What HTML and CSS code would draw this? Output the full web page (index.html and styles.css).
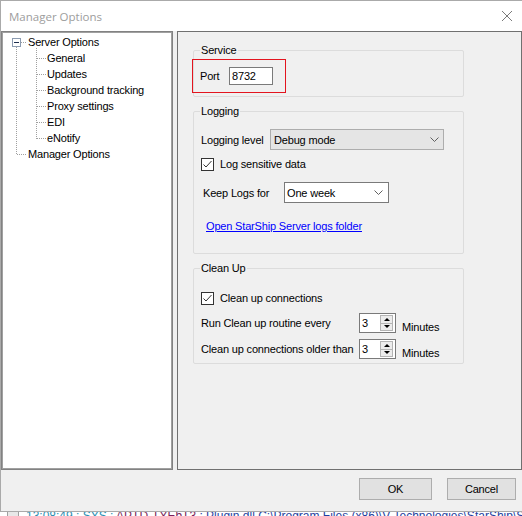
FILE: index.html
```html
<!DOCTYPE html>
<html>
<head>
<meta charset="utf-8">
<link rel="stylesheet" href="styles.css">
</head>
<body>
<div class="window">
  <div class="titlebar">
    <span class="title">Manager Options</span>
    <svg class="close" width="10" height="10" viewBox="0 0 10 10"><path d="M0 0 L10 10 M10 0 L0 10" stroke="#7a7a7a" stroke-width="1" fill="none"/></svg>
  </div>
  <div class="client">
    <div class="main">
      <div class="tree">
        <svg class="treelines" width="60" height="130" viewBox="0 0 60 130">
          <g stroke="#a0a0a0" stroke-width="1" stroke-dasharray="1 1" fill="none">
            <line x1="18" y1="9.5" x2="24" y2="9.5"/>
            <line x1="13.5" y1="14" x2="13.5" y2="122"/>
            <line x1="14" y1="121.5" x2="24" y2="121.5"/>
            <line x1="33.5" y1="15" x2="33.5" y2="106"/>
            <line x1="34" y1="25.5" x2="43" y2="25.5"/>
            <line x1="34" y1="41.5" x2="43" y2="41.5"/>
            <line x1="34" y1="57.5" x2="43" y2="57.5"/>
            <line x1="34" y1="73.5" x2="43" y2="73.5"/>
            <line x1="34" y1="89.5" x2="43" y2="89.5"/>
            <line x1="34" y1="105.5" x2="43" y2="105.5"/>
          </g>
          <rect x="9.5" y="5.5" width="8" height="8" fill="#fff" stroke="#8c9bb0"/>
          <line x1="11" y1="9.5" x2="16" y2="9.5" stroke="#1f2f4f"/>
        </svg>
        <ul class="nodes">
          <li class="node l0">Server Options</li>
          <li class="node l1">General</li>
          <li class="node l1">Updates</li>
          <li class="node l1">Background tracking</li>
          <li class="node l1">Proxy settings</li>
          <li class="node l1">EDI</li>
          <li class="node l1">eNotify</li>
          <li class="node l0">Manager Options</li>
        </ul>
      </div>
      <div class="panel">
        <fieldset class="group service">
          <legend>Service</legend>
          <div class="row port-row">
            <span class="lbl-port">Port</span>
            <span class="textbox port">8732</span>
          </div>
        </fieldset>

        <fieldset class="group logging">
          <legend>Logging</legend>
          <div class="row level-row">
            <span class="lbl-level">Logging level</span>
            <span class="combo gray">
              <span class="combo-text">Debug mode</span>
              <svg class="chev" width="9" height="5" viewBox="0 0 9 5"><path d="M0.5 0.5 L4.5 4.5 L8.5 0.5" stroke="#606060" fill="none"/></svg>
            </span>
          </div>
          <div class="row check-row">
            <span class="checkbox"><svg width="11" height="11" viewBox="0 0 11 11"><path d="M1.5 5.5 L4 8 L9.5 2" stroke="#333" stroke-width="1" fill="none"/></svg></span>
            <span class="check-label">Log sensitive data</span>
          </div>
          <div class="row keep-row">
            <span class="lbl-keep">Keep Logs for</span>
            <span class="combo white">
              <span class="combo-text">One week</span>
              <svg class="chev" width="9" height="5" viewBox="0 0 9 5"><path d="M0.5 0.5 L4.5 4.5 L8.5 0.5" stroke="#606060" fill="none"/></svg>
            </span>
          </div>
          <div class="row link-row"><a class="link">Open StarShip Server logs folder</a></div>
        </fieldset>

        <fieldset class="group cleanup">
          <legend>Clean Up</legend>
          <div class="row check-row clean-check">
            <span class="checkbox"><svg width="11" height="11" viewBox="0 0 11 11"><path d="M1.5 5.5 L4 8 L9.5 2" stroke="#333" stroke-width="1" fill="none"/></svg></span>
            <span class="check-label">Clean up connections</span>
          </div>
          <div class="row spin-row first">
            <span class="lbl-spin">Run Clean up routine every</span>
            <span class="spin"><span class="spin-val">3</span><span class="spin-btns"><span class="sb up"></span><span class="sb down"></span></span></span>
            <span class="unit">Minutes</span>
          </div>
          <div class="row spin-row second">
            <span class="lbl-spin">Clean up connections older than</span>
            <span class="spin"><span class="spin-val">3</span><span class="spin-btns"><span class="sb up"></span><span class="sb down"></span></span></span>
            <span class="unit">Minutes</span>
          </div>
        </fieldset>
        <div class="highlight"></div>
      </div>
    </div>
    <div class="footer">
      <button class="btn ok">OK</button>
      <button class="btn cancel">Cancel</button>
    </div>
  </div>
</div>
<div class="behind">
  <span class="bh-edge"></span>
  <span class="bh-text"><span class="t1">13:08:49 : SYS : </span><span class="t2">APTD-TYEbT3</span><span class="t3"> : Plugin dll C:\Program Files (x86)\V-Technologies\StarShip\Server\Core</span></span>
</div>
</body>
</html>
```
FILE: styles.css
```css
html, body {
  margin: 0;
  padding: 0;
}
body {
  width: 522px;
  height: 516px;
  overflow: hidden;
  background: #ffffff;
  font-family: "Liberation Sans", Arial, sans-serif;
  font-size: 11px;
  letter-spacing: -0.17px;
  color: #000;
}
.window {
  width: 521px;
  height: 510px;
  border: 1px solid #aaaaaa;
  border-right: none;
  background: #f0f0f0;
}
.titlebar {
  height: 30px;
  background: #ffffff;
  display: flex;
  align-items: center;
  justify-content: space-between;
  padding: 0 10px 0 8px;
  box-sizing: border-box;
}
.title {
  font-family: "Open Sans", "Noto Sans", sans-serif;
  font-size: 11.5px;
  letter-spacing: 0;
  color: #9d9d9d;
}
.close {
  display: block;
}
.client {
  height: 480px;
  display: flex;
  flex-direction: column;
  background: #f0f0f0;
}
.main {
  display: flex;
  gap: 4px;
  height: 439px;
}
.tree {
  width: 172px;
  box-sizing: border-box;
  border: 1px solid #828282;
  box-shadow: inset 0 0 0 1px #a0a0a0;
  padding: 1px;
  background: #fff;
  position: relative;
}
.treelines {
  position: absolute;
  left: 1px;
  top: 1px;
}
.nodes {
  list-style: none;
  margin: 0;
  padding: 1px 0 0 0;
  position: relative;
}
.node {
  height: 16px;
  line-height: 16px;
  white-space: nowrap;
}
.node.l0 { padding-left: 25px; }
.node.l1 { padding-left: 44px; }

.panel {
  width: 345px;
  box-sizing: border-box;
  border: 1px solid #707070;
  padding: 12px 0 0 15px;
  position: relative;
}
.group {
  margin: 0;
  width: 271px;
  box-sizing: border-box;
  border: 1px solid #dcdcdc;
  border-radius: 2px;
  padding: 0 0 0 6px;
  min-width: 0;
}
.group legend {
  padding: 0 1px;
  margin: 0;
  line-height: 13px;
}
.row {
  display: flex;
  align-items: center;
}
.service { padding-bottom: 11px; }
.port-row { margin-top: 10px; height: 18px; }
.lbl-port { width: 29px; }
.textbox {
  box-sizing: border-box;
  background: #fff;
  border: 1px solid #7a7a7a;
  height: 18px;
  line-height: 16px;
  padding-left: 2px;
}
.port { width: 44px; }

.logging { margin-top: 8px; padding-bottom: 20px; }
.level-row { margin-top: 11px; height: 21px; padding-left: 1px; }
.lbl-level { width: 69px; }
.combo {
  box-sizing: border-box;
  height: 21px;
  display: flex;
  align-items: center;
  justify-content: space-between;
  border: 1px solid #adadad;
}
.combo.gray {
  width: 174px;
  background: #e5e5e5;
  padding: 0 4px 0 3px;
}
.combo.white {
  width: 105px;
  background: #fff;
  border-color: #7a7a7a;
  padding: 0 5px 0 2px;
}
.chev { display: block; }
.check-row { margin-top: 8px; height: 13px; padding-left: 1px; }
.checkbox {
  box-sizing: border-box;
  width: 13px;
  height: 13px;
  border: 1px solid #333;
  background: #fff;
  display: block;
}
.checkbox svg { display: block; }
.check-label { margin-left: 6px; margin-top: -1px; }
.keep-row { margin-top: 11px; height: 21px; padding-left: 3px; }
.lbl-keep { width: 81px; }
.link-row { margin-top: 17px; height: 13px; padding-left: 6px; }
.link {
  color: #0000ff;
  text-decoration: underline;
  line-height: 13px;
}

.cleanup { margin-top: 8px; padding-bottom: 4px; }
.clean-check { margin-top: 17px; }
.spin-row { height: 20px; padding-left: 1px; }
.spin-row.first { margin-top: 8px; }
.spin-row.second { margin-top: 6px; }
.lbl-spin { width: 158px; white-space: nowrap; }
.spin {
  box-sizing: border-box;
  width: 37px;
  height: 20px;
  border: 1px solid #7a7a7a;
  background: #fff;
  display: flex;
  padding: 1px 2px 1px 0;
}
.spin-val {
  flex: 1;
  padding-left: 2px;
  line-height: 16px;
}
.spin-btns {
  width: 13px;
  display: flex;
  flex-direction: column;
}
.sb {
  flex: 1;
  box-sizing: border-box;
  border: 1px solid #b4b4b4;
  background: #ececec;
  display: flex;
  align-items: center;
  justify-content: center;
}
.sb + .sb { border-top: none; }
.sb.up::after {
  content: "";
  border-left: 3px solid transparent;
  border-right: 3px solid transparent;
  border-bottom: 3px solid #000;
}
.sb.down::after {
  content: "";
  border-left: 3px solid transparent;
  border-right: 3px solid transparent;
  border-top: 3px solid #000;
}
.unit {
  margin-left: 6px;
  margin-top: 7px;
}

.highlight {
  position: absolute;
  left: 14px;
  top: 27px;
  width: 94px;
  height: 34px;
  box-sizing: border-box;
  border: 1px solid #e3141e;
}

.footer {
  flex: 1;
  display: flex;
  justify-content: flex-end;
  align-items: flex-start;
  gap: 15px;
  padding: 8px 6px 0 0;
}
.btn {
  box-sizing: border-box;
  height: 22px;
  background: #e1e1e1;
  border: 1px solid #adadad;
  font-family: "Liberation Sans", Arial, sans-serif;
  font-size: 11px;
  letter-spacing: -0.17px;
  color: #000;
  padding: 0;
  margin: 0;
}
.btn.ok { width: 73px; }
.btn.cancel { width: 69px; }

.behind {
  height: 4px;
  overflow: hidden;
  display: flex;
  white-space: nowrap;
  background: #fff;
}
.bh-edge {
  width: 10px;
  height: 4px;
  margin-left: 7px;
  border-left: 1px solid #a0a0a0;
  border-right: 1px solid #a0a0a0;
  background: #e8e8e8;
  flex: none;
}
.bh-text {
  margin-left: 7px;
  margin-top: -3px;
  font-size: 12px;
  line-height: 14px;
  letter-spacing: 0;
}
.t1 { color: #2b8fb3; }
.t2 { color: #7a1f5a; }
.t3 { color: #1f3fa0; }
```
